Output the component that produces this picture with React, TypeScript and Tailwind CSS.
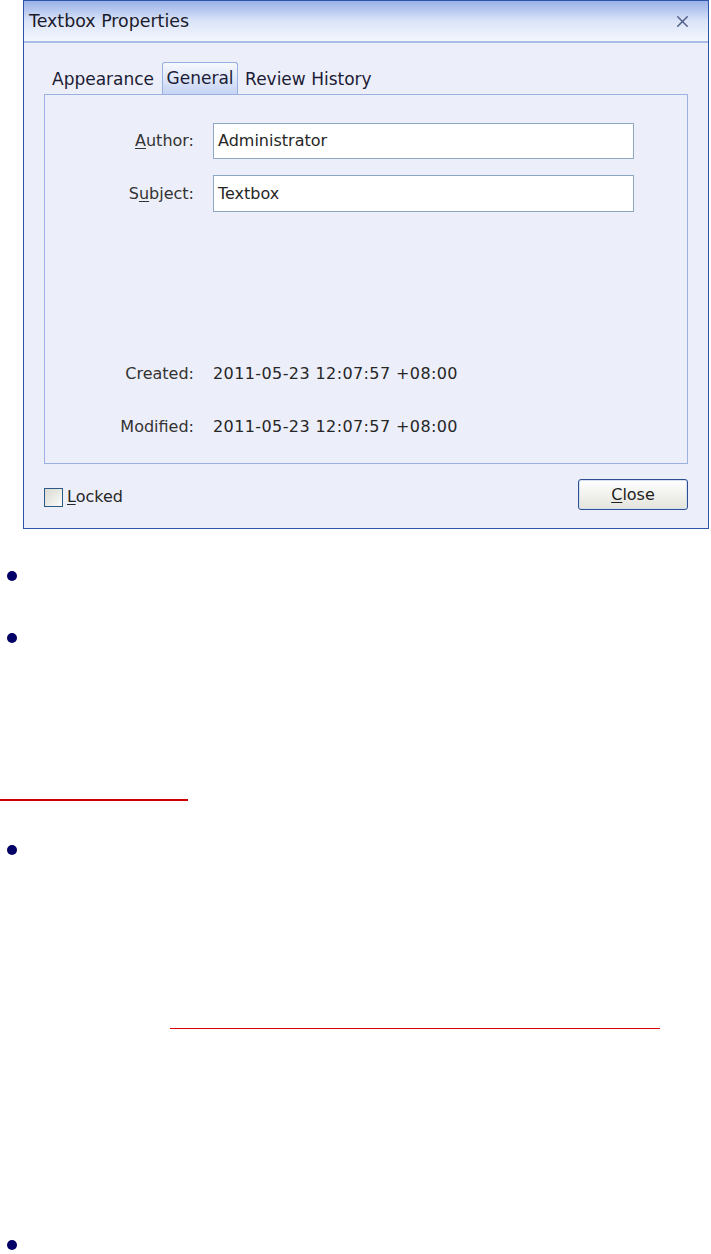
import { X } from 'lucide-react';

const Bullet = ({ mt }: { mt: string }) => (
  <div className={`${mt} ml-[7px] h-[10px] w-[10px] rounded-full bg-[#000066]`} />
);

const TextboxProperties = () => {
  return (
    <div className="ml-[23px] flex h-[529px] w-[686px] flex-col border border-[#2f56a6] bg-[#eceef9]">
      {/* title bar */}
      <div className="flex h-[40px] items-center justify-between bg-gradient-to-b from-[#9ab2e8] via-[#dbe4f8] to-[#f4f6fc] pl-[5px] pr-[16px]">
        <span className="text-[17.4px] text-[#1b1b2b]">Textbox Properties</span>
        <X className="h-[19px] w-[19px] text-[#4e5d88]" strokeWidth={1.8} />
      </div>
      <div className="h-[2px] bg-[#a9bde8]" />

      <div className="flex flex-1 flex-col px-[20px] pt-[20px]">
        {/* tabs */}
        <div className="flex h-[31px] items-end text-[17px] text-[#1c1c36]">
          <div className="flex h-[29px] items-center pl-[8px] pr-[8px]">Appearance</div>
          <div className="flex h-[32px] w-[76px] items-center justify-center rounded-t-[3px] border border-b-0 border-[#98afe0] bg-gradient-to-b from-[#f7f9fe] to-[#c6d4f3]">
            General
          </div>
          <div className="flex h-[29px] items-center pl-[7px]">Review History</div>
        </div>

        {/* panel */}
        <div className="flex h-[370px] flex-col border border-[#9cb1e2] text-[16px] text-[#262626]">
          <div className="mt-[28px] flex h-[36px] items-center">
            <span className="w-[149px] text-right text-[#333]">
              <span className="underline underline-offset-2">A</span>uthor:
            </span>
            <div className="ml-[19px] flex h-full w-[421px] items-center border border-[#8ea7c2] bg-white px-[4px]">
              Administrator
            </div>
          </div>
          <div className="mt-[16px] flex h-[37px] items-center">
            <span className="w-[149px] text-right text-[#333]">
              S<span className="underline underline-offset-2">u</span>bject:
            </span>
            <div className="ml-[19px] flex h-full w-[421px] items-center border border-[#8ea7c2] bg-white px-[4px]">
              Textbox
            </div>
          </div>
          <div className="mt-[150px] flex h-[24px] items-center">
            <span className="w-[149px] text-right text-[#333]">Created:</span>
            <span className="ml-[19px] tracking-[0.4px]">2011-05-23 12:07:57 +08:00</span>
          </div>
          <div className="mt-[29px] flex h-[24px] items-center">
            <span className="w-[149px] text-right text-[#333]">Modified:</span>
            <span className="ml-[19px] tracking-[0.4px]">2011-05-23 12:07:57 +08:00</span>
          </div>
        </div>

        {/* footer */}
        <div className="mt-[15px] flex items-start justify-between">
          <label className="mt-[6px] flex items-center text-[16px] text-[#262626]">
            <span className="h-[19px] w-[19px] border border-[#2c5a84] bg-gradient-to-br from-[#d9d9d2] to-[#fbfbf9]" />
            <span className="ml-[4px]">
              <span className="underline underline-offset-2">L</span>ocked
            </span>
          </label>
          <button className="flex h-[31px] w-[110px] items-center justify-center rounded-[3px] border border-[#2d4f92] bg-gradient-to-b from-[#ffffff] to-[#e4e4dd] text-[16px] text-[#1e1e1e] shadow-[inset_0_0_0_1px_#d6e0f3]">
            <span>
              <span className="underline underline-offset-2">C</span>lose
            </span>
          </button>
        </div>
      </div>
    </div>
  );
};

export default function App() {
  return (
    <div
      className="flex h-[1254px] w-[711px] flex-col overflow-hidden bg-white"
      style={{ fontFamily: '"DejaVu Sans", Verdana, sans-serif' }}
    >
      <TextboxProperties />
      <Bullet mt="mt-[42px]" />
      <Bullet mt="mt-[52px]" />
      <div className="mt-[156px] h-[2px] w-[188px] bg-[#cc0000]" />
      <Bullet mt="mt-[44px]" />
      <div className="ml-[170px] mt-[173px] h-[1px] w-[490px] bg-[#dd0000]" />
      <Bullet mt="mt-[211px]" />
    </div>
  );
}
